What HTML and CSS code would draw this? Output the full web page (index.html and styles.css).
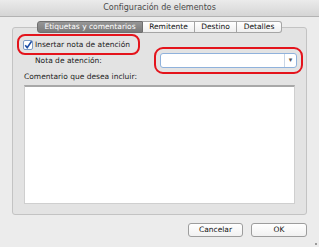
FILE: index.html
```html
<!DOCTYPE html>
<html lang="es">
<head>
    <meta charset="UTF-8">
    <title>Configuración de elementos</title>
    <link rel="stylesheet" href="styles.css">
</head>
<body>
    <div class="dialog">
        <div class="titlebar">Configuración de elementos</div>
        <div class="dialog-body">
            <div class="tabs">
                <span class="tab active">Etiquetas y comentarios</span>
                <span class="tab">Remitente</span>
                <span class="tab">Destino</span>
                <span class="tab">Detalles</span>
            </div>
            <div class="panel">
                <label class="check-row marked">
                    <svg class="checkbox" width="10" height="10" viewBox="0 0 10 10">
                        <rect x="0.5" y="0.5" width="9" height="9" rx="1.5" fill="#fff" stroke="#7f9cc4"/>
                        <path d="M2.2 5.2 L4.2 7.6 L8.6 1.2" fill="none" stroke="#1f4fa6" stroke-width="1.6"/>
                    </svg>
                    <span>Insertar nota de atención</span>
                </label>
                <div class="field-row">
                    <span class="field-label">Nota de atención:</span>
                    <div class="select marked">
                        <span class="select-arrow">▾</span>
                    </div>
                </div>
                <div class="comment-label">Comentario que desea incluir:</div>
                <div class="textarea"></div>
            </div>
            <div class="buttons">
                <button class="btn">Cancelar</button>
                <button class="btn">OK</button>
            </div>
        </div>
        <span class="grip"></span>
    </div>
</body>
</html>
```

FILE: styles.css
```css
* {
    margin: 0;
    padding: 0;
    box-sizing: border-box;
}

body {
    font-family: "DejaVu Sans", sans-serif;
    font-size: 7.5px;
    line-height: 11px;
    color: #1c1c1c;
    background: #ececec;
}

.dialog {
    width: 319px;
    height: 247px;
    background: #ececec;
    position: relative;
    overflow: hidden;
}

.titlebar {
    height: 17px;
    line-height: 15px;
    font-size: 8px;
    text-align: center;
    color: #4a4a4a;
    background: linear-gradient(#ebebeb, #d5d5d5);
    border-bottom: 1px solid #b3b3b3;
}

.dialog-body {
    padding: 4px 12px 0;
}

/* Tabs sit over the panel's top border */
.tabs {
    display: flex;
    justify-content: center;
    height: 12px;
    position: relative;
    z-index: 1;
}

.tab {
    height: 12px;
    line-height: 10px;
    text-align: center;
    background: linear-gradient(#ffffff, #efefef);
    border: 1px solid #a5a5a5;
    border-left: none;
    color: #111;
    white-space: nowrap;
}

.tab:first-child {
    border-left: 1px solid #a5a5a5;
    border-radius: 3px 0 0 3px;
}

.tab:last-child {
    border-radius: 0 3px 3px 0;
}

.tab.active {
    width: 106px;
    background: linear-gradient(#969696, #7a7a7a);
    border-color: #6f6f6f;
    color: #fff;
}

.tab:nth-child(2) { width: 52px; }
.tab:nth-child(3) { width: 42px; }
.tab:nth-child(4) { width: 45px; }

.panel {
    margin-top: -6px;
    background: #e3e3e3;
    border: 1px solid #c3c3c3;
    border-radius: 3px;
    padding: 10px 11px 10px;
}

.marked {
    outline: 2px solid #e4141c;
    outline-offset: 2px;
    border-radius: 4px;
}

.check-row {
    display: inline-flex;
    align-items: center;
    height: 13px;
    margin-left: -3px;
    padding: 0 6px 0 2px;
    gap: 2px;
    vertical-align: top;
}

.checkbox {
    display: block;
}

.field-row {
    display: flex;
    align-items: center;
    margin-top: 2px;
    height: 15px;
}

.field-label {
    padding-left: 11px;
}

.select {
    margin-left: auto;
    margin-right: -2px;
    width: 137px;
    height: 15px;
    background: #fff;
    border: 1px solid #8fb2dc;
    border-radius: 3px;
    outline-offset: 4px;
    display: flex;
    justify-content: flex-end;
}

.select-arrow {
    width: 12px;
    border-left: 1px solid #c9d6e6;
    text-align: center;
    font-size: 7px;
    line-height: 13px;
    color: #555;
}

.comment-label {
    margin-top: 3px;
}

.textarea {
    margin-top: 3px;
    height: 119px;
    background: #fff;
    border: 1px solid #cfcfcf;
    border-top: 2px solid #a8a8a8;
}

.buttons {
    display: flex;
    justify-content: flex-end;
    gap: 8px;
    margin-top: 8px;
}

.btn {
    font-family: "DejaVu Sans", sans-serif;
    font-size: 7.5px;
    line-height: 12px;
    height: 14px;
    width: 55px;
    color: #111;
    background: linear-gradient(#ffffff, #f1f1f1);
    border: 1px solid #9d9d9d;
    border-radius: 3px;
}

.btn:last-child {
    width: 56px;
}

.grip {
    position: absolute;
    right: 2px;
    bottom: 2px;
    width: 2px;
    height: 2px;
    background: #9a9a9a;
}
```
